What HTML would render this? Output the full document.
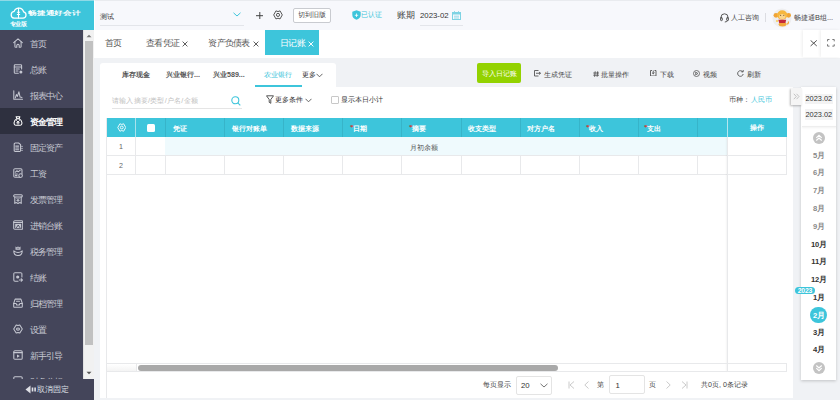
<!DOCTYPE html>
<html><head><meta charset="utf-8">
<style>
*{box-sizing:border-box;margin:0;padding:0}
html,body{width:840px;height:400px;overflow:hidden;background:#f0f2f5;font-family:"Liberation Sans",sans-serif;color:#333}
.a{position:absolute;white-space:nowrap}
#logo{left:0;top:0;width:94.5px;height:30px;background:#3dc5db;border-top:1px solid #8fd9e6}
#side{left:0;top:30px;width:83px;height:370px;background:#44455a;overflow:hidden}
#sbar{left:83px;top:30px;width:11px;height:349px;background:#f1f1f1;border-left:1px solid #e2e2e2}
#thumb{left:85px;top:41px;width:8px;height:304px;background:#c1c1c1}
#topbar{left:94px;top:0;width:746px;height:30px;background:#f7f8fc;border-top:1px solid #e9ebef;border-left:1px solid #fff}
#tabbar{left:94px;top:30px;width:746px;height:27.5px;background:#fff}
.mi{position:absolute;left:0;width:83px;height:26px;color:#c8cad3;font-size:8.2px;line-height:26px}
.mi span{position:absolute;left:29.5px;top:0.8px;letter-spacing:-0.75px;font-size:8.7px}
.mi svg{position:absolute;left:13px;top:7.6px;width:10px;height:10px}
.mi.act{background:#2e303f;color:#fff;font-weight:bold}
#card1{left:100px;top:63px;width:236px;height:30px;background:#fff;border-radius:3px 3px 0 0}
#card{left:100px;top:87px;width:693px;height:310.5px;background:#fff}
.th{top:118px;height:19px;background:#3dc5db}
.t85{font-size:9px;line-height:11px;letter-spacing:-0.7px}
.th7{font-size:7.1px;line-height:9px;color:#fff;font-weight:bold;margin-top:2px;font-family:"Liberation Serif",serif}
.dp{font-size:7.4px;line-height:10px;color:#333}
.mo{left:801.5px;width:35px;text-align:center;font-size:7.6px;line-height:10px;font-weight:bold;letter-spacing:-0.2px}
.tb{top:69.5px;font-size:7.4px;line-height:9px;color:#444}
.t7{font-size:7.1px;line-height:9px}
</style></head><body>
<!-- logo -->
<div class="a" id="logo">
  <svg class="a" style="left:9.5px;top:5.5px" width="17" height="12" viewBox="0 0 17 12" fill="none" stroke="#fff" stroke-width="1.25" stroke-linejoin="round">
    <path d="M4 11.2 H13 A3.2 3.2 0 0 0 13.6 4.9 A4.9 4.9 0 0 0 4.2 4.3 A3.5 3.5 0 0 0 4 11.2 Z"/>
    <path d="M8.5 0.8 V11.5 M6.9 5.2 H10.1 M6.9 7.4 H10.1" stroke-width="1.05"/>
  </svg>
  <div class="a" style="left:27.8px;top:6.8px;color:#fff;font-size:9px;line-height:11px;letter-spacing:-0.1px;font-weight:bold;transform:scaleY(0.7);transform-origin:0 50%">畅捷通好会计</div>
  <div class="a" style="left:9.5px;top:18.5px;color:#fff;font-size:5.6px;line-height:8px;font-weight:bold;letter-spacing:-0.1px">专业版</div>
</div>
<!-- sidebar -->
<div class="a" id="side">
  <div class="mi" style="top:0px"><svg viewBox="0 0 10 10" fill="none" stroke="#c5c7d1" stroke-width="1.05" stroke-linecap="round" stroke-linejoin="round"><path d="M0.7 4.7 L5 0.9 L9.3 4.7"/><path d="M1.9 3.7 V8.4 Q1.9 9.3 2.8 9.3 H3.8 V7 Q5 5.8 6.2 7 V9.3 H7.2 Q8.1 9.3 8.1 8.4 V3.7"/></svg><span>首页</span></div>
  <div class="mi" style="top:26px"><svg viewBox="0 0 10 10" fill="none" stroke="#c5c7d1" stroke-width="1.05" stroke-linecap="round" stroke-linejoin="round"><path d="M8.6 5 V1.6 Q8.6 0.7 7.7 0.7 H2.2 Q1.3 0.7 1.3 1.6 V8.4 Q1.3 9.3 2.2 9.3 H5.3"/><path d="M1.3 2.9 H8.6 M3 4.9 H6.3 M3 6.9 H5"/><circle cx="7.9" cy="7.9" r="1.5" fill="#c5c7d1" stroke="none"/></svg><span>总账</span></div>
  <div class="mi" style="top:52px"><svg viewBox="0 0 10 10" fill="none" stroke="#c5c7d1" stroke-width="1.05" stroke-linecap="round" stroke-linejoin="round"><path d="M0.8 0.8 V9.2 H9.5"/><path d="M2.3 7.9 L3.4 4.6 L4.4 6.4 L5.9 1.8 L7.1 7.1 L9 7.5"/></svg><span>报表中心</span></div>
  <div class="mi act" style="top:78px"><svg viewBox="0 0 10 10" fill="none" stroke="#fff" stroke-width="1.05" stroke-linecap="round" stroke-linejoin="round"><path d="M3.1 0.8 H6.9 L6 2.7 H4 Z"/><path d="M4 2.7 C0.4 4.2 0.2 9.3 3 9.3 H7 C9.8 9.3 9.6 4.2 6 2.7"/><path d="M3.6 4.6 L5 6 L6.4 4.6 M5 6 V8.2 M3.7 6.8 H6.3" stroke-width="0.9"/></svg><span>资金管理</span></div>
  <div class="mi" style="top:104px"><svg viewBox="0 0 10 10" fill="none" stroke="#c5c7d1" stroke-width="1.05" stroke-linecap="round" stroke-linejoin="round"><path d="M1.2 2 Q1.2 1 2.2 1 H5.6 L7.6 2.6 V8.6 Q7.6 9.4 6.8 9.4 H2.2 Q1.2 9.4 1.2 8.4 Z"/><path d="M2.7 4.1 H5.7 M2.7 5.9 H5.7 M2.7 7.7 H5.7"/><circle cx="9" cy="4.4" r="0.7" fill="#c5c7d1" stroke="none"/><circle cx="9" cy="6.4" r="0.7" fill="#c5c7d1" stroke="none"/><circle cx="9" cy="8.4" r="0.7" fill="#c5c7d1" stroke="none"/></svg><span>固定资产</span></div>
  <div class="mi" style="top:130px"><svg viewBox="0 0 10 10" fill="none" stroke="#c5c7d1" stroke-width="1.05" stroke-linecap="round" stroke-linejoin="round"><path d="M6.5 9.3 H2 Q0.8 9.3 0.8 8.1 V1.9 Q0.8 0.7 2 0.7 H7.8 Q9 0.7 9 1.9 V5.6"/><path d="M2.4 4.2 L3.8 2.8 L5.2 3.8 L7.3 2.2 M2.4 6 H4.4 M2.4 7.6 H4"/><circle cx="7.6" cy="7.6" r="1.8"/></svg><span>工资</span></div>
  <div class="mi" style="top:156px"><svg viewBox="0 0 10 10" fill="none" stroke="#c5c7d1" stroke-width="1.05" stroke-linecap="round" stroke-linejoin="round"><rect x="0.7" y="0.8" width="8.6" height="2.1" rx="1"/><path d="M1.8 2.9 V9.4 L3.2 8.6 L5 9.4 L6.8 8.6 L8.2 9.4 V2.9"/><path d="M3.7 4.2 L5 5.5 L6.3 4.2 M5 5.5 V7.8 M3.8 6.4 H6.2" stroke-width="0.9"/></svg><span>发票管理</span></div>
  <div class="mi" style="top:182px"><svg viewBox="0 0 10 10" fill="none" stroke="#c5c7d1" stroke-width="1.05" stroke-linecap="round" stroke-linejoin="round"><rect x="0.7" y="0.7" width="9" height="8.6" rx="1.1"/><path d="M0.7 2.5 H9.7"/><rect x="2.2" y="3.8" width="6" height="4.2" fill="#c5c7d1" stroke="none"/><path d="M3.5 7.6 L5.2 5 L6.9 7.6" stroke="#44455a" stroke-width="0.9"/></svg><span>进销台账</span></div>
  <div class="mi" style="top:208px"><svg viewBox="0 0 10 10" fill="none" stroke="#c5c7d1" stroke-width="1.05" stroke-linecap="round" stroke-linejoin="round"><path d="M2.5 0.6 L3.7 1.3 L5 0.6 L6.3 1.3 L7.5 0.6 V3.7 H2.5 Z" fill="#c5c7d1" stroke="none"/><path d="M4 2.2 H6" stroke="#44455a" stroke-width="0.6"/><path d="M0.8 4.9 Q0.8 9.5 5 9.5 Q9.2 9.5 9.2 4.9 M0.8 4.9 Q5 8.2 9.2 4.9"/></svg><span>税务管理</span></div>
  <div class="mi" style="top:234px"><svg viewBox="0 0 10 10" fill="none" stroke="#c5c7d1" stroke-width="1.05" stroke-linecap="round" stroke-linejoin="round"><path d="M8.9 5 V1.9 Q8.9 0.7 7.7 0.7 H2 Q0.8 0.7 0.8 1.9 V8.1 Q0.8 9.3 2 9.3 H5"/><circle cx="4.7" cy="5" r="1.6" fill="#c5c7d1" stroke="none"/><path d="M6.3 8 H9.5 M8.2 6.7 L9.5 8 L8.2 9.3"/></svg><span>结账</span></div>
  <div class="mi" style="top:260px"><svg viewBox="0 0 10 10" fill="none" stroke="#c5c7d1" stroke-width="1.05" stroke-linecap="round" stroke-linejoin="round"><path d="M2.1 1.1 H7.9 L9.3 5.4 V8.5 Q9.3 9.3 8.5 9.3 H1.5 Q0.7 9.3 0.7 8.5 V5.4 Z"/><path d="M0.7 5.4 H3.1 L3.7 7 H6.3 L6.9 5.4 H9.3 M3.5 3.3 H6.5"/></svg><span>归档管理</span></div>
  <div class="mi" style="top:286px"><svg viewBox="0 0 10 10" fill="none" stroke="#c5c7d1" stroke-width="1.05" stroke-linecap="round" stroke-linejoin="round"><path d="M3.2 1 L5 1.6 L6.8 1 L9.3 5 L6.8 9 L5 8.4 L3.2 9 L0.7 5 Z"/><ellipse cx="5" cy="5" rx="1.5" ry="1.1"/></svg><span>设置</span></div>
  <div class="mi" style="top:312px"><svg viewBox="0 0 10 10" fill="none" stroke="#c5c7d1" stroke-width="1.05" stroke-linecap="round" stroke-linejoin="round"><rect x="0.8" y="0.7" width="8.4" height="8.6" rx="1.1"/><path d="M0.8 2.6 H9.2"/><path d="M4 4.4 L6.9 6.1 L4 7.8 Z" fill="#c5c7d1" stroke="none"/></svg><span>新手引导</span></div>
  <div class="mi" style="top:338px"><svg viewBox="0 0 10 10" fill="none" stroke="#c5c7d1" stroke-width="1.05" stroke-linecap="round" stroke-linejoin="round"><rect x="0.8" y="0.7" width="8.4" height="8.6" rx="1.1"/></svg><span>财务分析</span></div>
</div>
<div class="a" style="left:0;top:378.5px;width:94px;height:21.5px;background:#44455a"></div>
<svg class="a" style="left:25px;top:385px" width="12" height="9" viewBox="0 0 12 9"><path d="M0.5 4.5 L5.5 0.5 V8.5 Z" fill="#dfe0e6"/><rect x="6.7" y="2.5" width="1.6" height="4" fill="#dfe0e6"/><rect x="9.3" y="2.5" width="1.6" height="4" fill="#dfe0e6"/></svg>
<div class="a" style="left:37px;top:384.5px;color:#dfe0e6;font-size:8px;line-height:10px">取消固定</div>
<div class="a" id="sbar"></div>
<div class="a" id="thumb"></div>
<svg class="a" style="left:85px;top:33px" width="8" height="6" viewBox="0 0 8 6"><path d="M1.5 4.3 L4 1.8 L6.5 4.3 Z" fill="#777"/></svg>
<svg class="a" style="left:85px;top:370px" width="8" height="6" viewBox="0 0 8 6"><path d="M1.5 1.7 L4 4.2 L6.5 1.7 Z" fill="#555"/></svg>

<!-- top bar -->
<div class="a" id="topbar"></div>
<div class="a" style="left:100px;top:10.5px;font-size:7.4px;line-height:11px;color:#333">测试</div>
<div class="a" style="left:100px;top:25px;width:144px;height:1px;background:#e3e5ea"></div>
<svg class="a" style="left:233px;top:12px" width="8" height="5" viewBox="0 0 8 5"><path d="M0.5 0.8 L4 4 L7.5 0.8" fill="none" stroke="#3dc5db" stroke-width="1"/></svg>
<svg class="a" style="left:255.7px;top:12px" width="7.6" height="7.4" viewBox="0 0 7.6 7.4"><path d="M3.8 0 V7.4 M0 3.7 H7.6" stroke="#3a3a3a" stroke-width="0.95"/></svg>
<svg class="a" style="left:273px;top:10.3px" width="10" height="9.8" viewBox="0 0 10 10" fill="none" stroke="#4a4a4a" stroke-width="0.95" stroke-linejoin="round"><path d="M2.9 0.9 L5 1.6 L7.1 0.9 L9.4 5 L7.1 9.1 L5 8.4 L2.9 9.1 L0.6 5 Z"/><circle cx="5" cy="5" r="1.6"/></svg>
<div class="a" style="left:293.3px;top:8.3px;width:37.7px;height:14.3px;border:1px solid #c9cbd0;border-radius:2px;background:#fff;font-size:7.3px;line-height:12px;text-align:center;color:#444">切到旧版</div>
<svg class="a" style="left:351.5px;top:10px" width="9" height="10" viewBox="0 0 9 10"><path d="M4.5 0.3 L8.7 1.8 V5 C8.7 7.5 6.8 9 4.5 9.8 C2.2 9 0.3 7.5 0.3 5 V1.8 Z" fill="#3dc5db"/><path d="M2.8 5.3 H6.2 M4.5 3.5 V7" stroke="#fff" stroke-width="0.8"/></svg>
<div class="a" style="left:361px;top:10px;font-size:7.4px;line-height:10px;color:#3dc5db">已认证</div>
<div class="a" style="left:397px;top:9.5px;font-size:8.6px;line-height:11px;color:#444">账期</div>
<div class="a" style="left:420px;top:9.5px;font-size:7.8px;line-height:11px;color:#333">2023-02</div>
<svg class="a" style="left:452px;top:10.5px" width="9" height="9" viewBox="0 0 9 9"><rect x="0.5" y="1.5" width="8" height="7" fill="none" stroke="#7fd3e3" stroke-width="1"/><rect x="0.5" y="1.5" width="8" height="2" fill="#7fd3e3"/><path d="M2.5 0 V2 M6.5 0 V2 M2 5.2 H7 M2 7 H7" stroke="#7fd3e3" stroke-width="0.8"/></svg>
<div class="a" style="left:420px;top:24.5px;width:43px;height:1px;background:#e3e5ea"></div>
<svg class="a" style="left:720px;top:13px" width="9" height="9.5" viewBox="0 0 9 9.5" fill="none" stroke="#505050" stroke-width="0.95" stroke-linecap="round"><path d="M1 5.5 V4.3 A3.5 3.5 0 0 1 8 4.3 V5.5"/><rect x="0.6" y="4.6" width="1.7" height="3" rx="0.6"/><rect x="6.7" y="4.6" width="1.7" height="3" rx="0.6"/><path d="M7.6 7.6 Q7.3 9 5.2 9"/></svg>
<div class="a" style="left:731px;top:12.5px;font-size:7.4px;line-height:10px;color:#444">人工咨询</div>
<div class="a" style="left:765px;top:13px;width:1px;height:9px;background:#dcdde2"></div>
<svg class="a" style="left:771.5px;top:7.5px" width="20" height="20" viewBox="0 0 20 20">
  <circle cx="10" cy="10" r="9.6" fill="#eeeef0"/>
  <circle cx="4" cy="7.3" r="2.4" fill="#f0a436"/><circle cx="16.6" cy="7.3" r="2.4" fill="#f0a436"/>
  <ellipse cx="10.2" cy="7" rx="5.2" ry="4.7" fill="#f6b73e"/>
  <ellipse cx="10.2" cy="8.6" rx="3.2" ry="2.7" fill="#fbd48a"/>
  <circle cx="8.6" cy="7.4" r="0.6" fill="#8a6a40"/><circle cx="11.8" cy="7.4" r="0.6" fill="#8a6a40"/>
  <ellipse cx="10.5" cy="16.2" rx="3.8" ry="2.2" fill="#f2a83c"/>
  <path d="M6.3 11.7 H14.2 L13.4 14.9 H7.2 Z" fill="#c42a3c"/>
  <circle cx="5" cy="13" r="1.1" fill="#f8cf5a"/>
  <path d="M14.5 16 Q17 16 16.3 13.5" stroke="#f2a83c" stroke-width="1.2" fill="none"/>
</svg>
<div class="a" style="left:794px;top:12.5px;font-size:7.4px;line-height:10px;color:#444">畅捷通B组...</div>

<!-- tab bar -->
<div class="a" id="tabbar"></div>
<div class="a t85" style="left:104.6px;top:37.5px;color:#555">首页</div>
<div class="a t85" style="left:146px;top:37.5px;color:#555">查看凭证</div>
<svg class="a" style="left:181.5px;top:40.5px" width="6" height="6" viewBox="0 0 6 6"><path d="M0.6 0.6 L5.4 5.4 M5.4 0.6 L0.6 5.4" stroke="#555" stroke-width="0.95"/></svg>
<div class="a t85" style="left:208.3px;top:37.5px;color:#555">资产负债表</div>
<svg class="a" style="left:252.5px;top:40.5px" width="6" height="6" viewBox="0 0 6 6"><path d="M0.6 0.6 L5.4 5.4 M5.4 0.6 L0.6 5.4" stroke="#555" stroke-width="0.95"/></svg>
<div class="a" style="left:264.7px;top:29.7px;width:54px;height:25.8px;background:#3dc5db"></div>
<div class="a t85" style="left:280px;top:37.5px;color:#fff">日记账</div>
<svg class="a" style="left:307.5px;top:40.5px" width="6" height="6" viewBox="0 0 6 6"><path d="M0.6 0.6 L5.4 5.4 M5.4 0.6 L0.6 5.4" stroke="#fff" stroke-width="0.95"/></svg>
<div class="a" style="left:803px;top:30px;width:18px;height:27px;background:#fff;box-shadow:-1px 0 3px rgba(0,0,0,0.07)"></div>
<div class="a" style="left:821px;top:30px;width:19px;height:27px;background:#fff;box-shadow:-1px 0 3px rgba(0,0,0,0.07)"></div>
<svg class="a" style="left:809.6px;top:40.2px" width="7.4" height="6.4" viewBox="0 0 7.4 6.4"><path d="M0.6 0.4 L6.8 6 M6.8 0.4 L0.6 6" stroke="#4a4a4a" stroke-width="0.95"/></svg>
<svg class="a" style="left:827px;top:39.2px" width="7.8" height="7.6" viewBox="0 0 8 8" fill="none" stroke="#666" stroke-width="0.95"><path d="M0.5 2.5 V0.5 H2.5 M5.5 0.5 H7.5 V2.5 M7.5 5.5 V7.5 H5.5 M2.5 7.5 H0.5 V5.5"/></svg>

<!-- card -->
<div class="a" id="card1"></div>
<div class="a" id="card"></div>
<div class="a t7" style="left:122px;top:71px;color:#555;font-weight:bold">库存现金</div>
<div class="a t7" style="left:166px;top:71px;color:#555;font-weight:bold">兴业银行...</div>
<div class="a t7" style="left:213px;top:71px;color:#555;font-weight:bold">兴业589...</div>
<div class="a t7" style="left:264px;top:71px;color:#3dc5db">农业银行</div>
<div class="a t7" style="left:302px;top:71px;color:#333">更多</div>
<svg class="a" style="left:316px;top:73px" width="7" height="5" viewBox="0 0 7 5"><path d="M0.5 0.8 L3.5 3.8 L6.5 0.8" fill="none" stroke="#555" stroke-width="0.9"/></svg>
<div class="a" style="left:255px;top:84.5px;width:47px;height:2px;background:#3dc5db"></div>

<!-- toolbar -->
<div class="a" style="left:477px;top:63px;width:44px;height:19.5px;background:#93d200;border-radius:2px"></div>
<div class="a tb" style="left:481.5px;top:68.5px;color:#fff;font-size:7.2px;letter-spacing:0.2px">导入日记账</div>
<svg class="a" style="left:534px;top:70.3px" width="7" height="6.5" viewBox="0 0 7 6.5" fill="none" stroke="#555" stroke-width="0.9"><path d="M4.5 0.5 H0.5 V6 H4.5 M2 3.25 H6.5 M5 2 L6.5 3.25 L5 4.5"/></svg>
<div class="a tb" style="left:543.5px">生成凭证</div>
<svg class="a" style="left:592.5px;top:71px" width="6.5" height="6" viewBox="0 0 6.5 6" fill="none" stroke="#555" stroke-width="0.9"><path d="M0.3 2 H6.2 M0.3 4.2 H6.2 M2.2 0.3 L1.6 5.8 M4.7 0.3 L4.1 5.8"/></svg>
<div class="a tb" style="left:601.3px">批量操作</div>
<svg class="a" style="left:650px;top:69.7px" width="6.5" height="6.5" viewBox="0 0 6.5 6.5" fill="none" stroke="#555" stroke-width="0.9"><path d="M2 0.5 H0.5 V6 H6 V0.5 H4.5 M3.25 0.5 V3.8 M2 2.6 L3.25 3.8 L4.5 2.6"/></svg>
<div class="a tb" style="left:659.7px">下载</div>
<svg class="a" style="left:693.2px;top:69.8px" width="7" height="7" viewBox="0 0 7 7" fill="none" stroke="#555" stroke-width="0.8"><circle cx="3.5" cy="3.5" r="3"/><path d="M2.7 2.1 L4.9 3.5 L2.7 4.9 Z"/></svg>
<div class="a tb" style="left:703px">视频</div>
<svg class="a" style="left:737px;top:69.8px" width="7" height="7" viewBox="0 0 7 7" fill="none" stroke="#555" stroke-width="0.9"><path d="M5.8 2 A2.8 2.8 0 1 0 6.2 4"/><path d="M4.3 1.8 H6.2 V0" /></svg>
<div class="a tb" style="left:746.7px">刷新</div>
<!-- search row -->
<div class="a t7" style="left:112px;top:95.5px;color:#c0c0c0;font-size:7.4px;letter-spacing:0.2px">请输入摘要/类型/户名/金额</div>
<svg class="a" style="left:231px;top:95.5px" width="10" height="10" viewBox="0 0 10 10" fill="none" stroke="#3dc5db" stroke-width="1.1"><circle cx="4.3" cy="4.3" r="3.5"/><path d="M6.8 6.8 L9.3 9.3"/></svg>
<div class="a" style="left:112px;top:108px;width:130px;height:1px;background:#e5e5e5"></div>
<svg class="a" style="left:266px;top:95px" width="8" height="9" viewBox="0 0 8 9" fill="none" stroke="#444" stroke-width="0.9"><path d="M0.5 0.8 H7.5 L4.8 4.5 V8.3 L3.2 7.3 V4.5 Z"/></svg>
<div class="a t7" style="left:275px;top:95.5px;color:#333">更多条件</div>
<svg class="a" style="left:305px;top:98px" width="7" height="5" viewBox="0 0 7 5"><path d="M0.5 0.8 L3.5 3.8 L6.5 0.8" fill="none" stroke="#555" stroke-width="0.9"/></svg>
<div class="a" style="left:331px;top:95.5px;width:8px;height:8px;border:1px solid #c8c8c8;border-radius:1px;background:#fff"></div>
<div class="a t7" style="left:341px;top:95.5px;color:#333">显示本日小计</div>
<div class="a t7" style="left:729px;top:95.5px;color:#444">币种：</div><div class="a t7" style="left:751px;top:95.5px;color:#3dc5db;letter-spacing:0.1px">人民币</div>

<!-- table -->
<div class="a" style="left:106.5px;top:118px;width:680.5px;height:19px;background:#3dc5db"></div>
<div class="a" style="left:165px;top:137px;width:562px;height:18px;background:#effafd"></div>
<div class="a" style="left:106.5px;top:155px;width:680.5px;height:1px;background:#e8e9eb"></div>
<div class="a" style="left:106.5px;top:174px;width:680.5px;height:1px;background:#e8e9eb"></div>
<div class="a" style="left:106px;top:118px;width:1px;height:279.5px;background:#e8e9eb"></div>
<div class="a" style="left:135px;top:137px;width:1px;height:37px;background:#e8e9eb"></div>
<div class="a" style="left:165px;top:155px;width:1px;height:19px;background:#e8e9eb"></div>
<div class="a" style="left:224px;top:155px;width:1px;height:19px;background:#e8e9eb"></div>
<div class="a" style="left:283px;top:155px;width:1px;height:19px;background:#e8e9eb"></div>
<div class="a" style="left:342px;top:155px;width:1px;height:19px;background:#e8e9eb"></div>
<div class="a" style="left:401px;top:155px;width:1px;height:19px;background:#e8e9eb"></div>
<div class="a" style="left:461px;top:155px;width:1px;height:19px;background:#e8e9eb"></div>
<div class="a" style="left:520px;top:155px;width:1px;height:19px;background:#e8e9eb"></div>
<div class="a" style="left:579px;top:155px;width:1px;height:19px;background:#e8e9eb"></div>
<div class="a" style="left:638px;top:155px;width:1px;height:19px;background:#e8e9eb"></div>
<div class="a" style="left:697px;top:155px;width:1px;height:19px;background:#e8e9eb"></div>
<div class="a" style="left:135px;top:118px;width:1px;height:19px;background:#a9e2ec"></div>
<div class="a" style="left:165px;top:118px;width:1px;height:19px;background:#37b4c9"></div>
<div class="a" style="left:224px;top:118px;width:1px;height:19px;background:#37b4c9"></div>
<div class="a" style="left:283px;top:118px;width:1px;height:19px;background:#37b4c9"></div>
<div class="a" style="left:342px;top:118px;width:1px;height:19px;background:#37b4c9"></div>
<div class="a" style="left:401px;top:118px;width:1px;height:19px;background:#37b4c9"></div>
<div class="a" style="left:461px;top:118px;width:1px;height:19px;background:#37b4c9"></div>
<div class="a" style="left:520px;top:118px;width:1px;height:19px;background:#37b4c9"></div>
<div class="a" style="left:579px;top:118px;width:1px;height:19px;background:#37b4c9"></div>
<div class="a" style="left:638px;top:118px;width:1px;height:19px;background:#37b4c9"></div>
<div class="a" style="left:697px;top:118px;width:1px;height:19px;background:#37b4c9"></div>
<div class="a th7" style="left:173px;top:122.5px">凭证</div>
<div class="a th7" style="left:232px;top:122.5px">银行对账单</div>
<div class="a th7" style="left:291px;top:122.5px">数据来源</div>
<div class="a th7" style="left:350px;top:122.5px"><span style="color:#e0322c;position:relative;top:-1.2px;margin-right:-0.6px">*</span>日期</div>
<div class="a th7" style="left:409px;top:122.5px"><span style="color:#e0322c;position:relative;top:-1.2px;margin-right:-0.6px">*</span>摘要</div>
<div class="a th7" style="left:468px;top:122.5px">收支类型</div>
<div class="a th7" style="left:527px;top:122.5px">对方户名</div>
<div class="a th7" style="left:586px;top:122.5px"><span style="color:#e0322c;position:relative;top:-1.2px;margin-right:-0.6px">*</span>收入</div>
<div class="a th7" style="left:644px;top:122.5px"><span style="color:#e0322c;position:relative;top:-1.2px;margin-right:-0.6px">*</span>支出</div>
<svg class="a" style="left:116.8px;top:122.8px" width="9.5" height="9" viewBox="0 0 10 10" fill="none" stroke="#fff" stroke-width="1" stroke-linejoin="round"><path d="M2.9 0.9 L5 1.6 L7.1 0.9 L9.4 5 L7.1 9.1 L5 8.4 L2.9 9.1 L0.6 5 Z"/><circle cx="5" cy="5" r="1.6"/></svg>
<div class="a" style="left:147px;top:124px;width:7.5px;height:7.5px;background:#fff;border-radius:1.5px"></div>
<div class="a t7" style="left:119px;top:143.3px;color:#666">1</div>
<div class="a t7" style="left:119px;top:161.5px;color:#666">2</div>
<div class="a t7" style="left:410px;top:143.6px;color:#555">月初余额</div>
<div class="a" style="left:727px;top:118px;width:60px;height:56px;border-left:1px solid #e3e5e8"></div>
<div class="a" style="left:727px;top:118px;width:60px;height:19px;background:#3dc5db"></div>
<div class="a th7" style="left:750px;top:122px">操作</div>
<div class="a" style="left:727px;top:137px;width:60px;height:37px;background:#fff;border-right:1px solid #e8e9eb"></div>
<div class="a" style="left:727px;top:155px;width:60px;height:1px;background:#e8e9eb"></div>
<div class="a" style="left:727px;top:174px;width:60px;height:1px;background:#e8e9eb"></div>
<div class="a" style="left:727px;top:137px;width:1px;height:234.5px;background:#e8e9eb;box-shadow:-1px 0 1.5px rgba(0,0,0,0.05)"></div>
<div class="a" style="left:727px;top:118px;width:1px;height:19px;background:#b5e6ef"></div>
<div class="a" style="left:106.5px;top:363px;width:680.5px;height:1px;background:#e8e9eb"></div>
<div class="a" style="left:107px;top:364px;width:29px;height:7px;background:linear-gradient(#fff,#f4f4f4)"></div>
<div class="a" style="left:106.5px;top:371px;width:680.5px;height:1px;background:#e8e9eb"></div>
<div class="a" style="left:136px;top:363px;width:1px;height:9px;background:#e8e9eb"></div>
<div class="a" style="left:786px;top:363px;width:1px;height:9px;background:#e8e9eb"></div>
<div class="a" style="left:137.5px;top:365px;width:420px;height:5.5px;background:#a9a9a9;border-radius:3px"></div>
<div class="a t7" style="left:483px;top:380.5px;color:#444">每页显示</div>
<div class="a" style="left:516px;top:375.5px;width:35.5px;height:19px;border:1px solid #e4e4e4;border-radius:2px"></div>
<div class="a t7" style="left:521px;top:380.5px;color:#333;font-size:7.8px">20</div>
<svg class="a" style="left:540px;top:382.5px" width="8" height="5" viewBox="0 0 8 5"><path d="M0.5 0.8 L4 4 L7.5 0.8" fill="none" stroke="#666" stroke-width="0.9"/></svg>
<svg class="a" style="left:567.5px;top:380.5px" width="7" height="8" viewBox="0 0 7 8" fill="none" stroke="#c4c4c4" stroke-width="0.9"><path d="M1 0.5 V7.5 M6 0.5 L2 4 L6 7.5"/></svg>
<svg class="a" style="left:583.5px;top:380.5px" width="5" height="8" viewBox="0 0 5 8" fill="none" stroke="#c4c4c4" stroke-width="0.9"><path d="M4.5 0.5 L0.8 4 L4.5 7.5"/></svg>
<div class="a t7" style="left:597px;top:380.5px;color:#444">第</div>
<div class="a" style="left:609px;top:375px;width:35.5px;height:19px;border:1px solid #e4e4e4;border-radius:2px"></div>
<div class="a t7" style="left:615.5px;top:380.5px;color:#333;font-size:7.8px">1</div>
<div class="a t7" style="left:649px;top:380.5px;color:#444">页</div>
<svg class="a" style="left:665.5px;top:380.5px" width="5" height="8" viewBox="0 0 5 8" fill="none" stroke="#c4c4c4" stroke-width="0.9"><path d="M0.5 0.5 L4.2 4 L0.5 7.5"/></svg>
<svg class="a" style="left:680.5px;top:380.5px" width="7" height="8" viewBox="0 0 7 8" fill="none" stroke="#c4c4c4" stroke-width="0.9"><path d="M6 0.5 V7.5 M1 0.5 L5 4 L1 7.5"/></svg>
<div class="a t7" style="left:701px;top:380.5px;color:#444">共0页, 0条记录</div>
<!-- date panel -->
<div class="a" style="left:801px;top:87px;width:35px;height:293px;background:#fff;box-shadow:0 1px 3px rgba(0,0,0,0.2)"></div>
<div class="a" style="left:790.8px;top:87.8px;width:11px;height:17px;background:#f5f5f5;box-shadow:-1px 1px 2px rgba(0,0,0,0.28)"></div>
<svg class="a" style="left:792.5px;top:92.5px" width="7" height="7" viewBox="0 0 7 7" fill="none" stroke="#b5b5b5" stroke-width="0.8"><path d="M0.8 0.8 L3.3 3.5 L0.8 6.2 M3.5 0.8 L6 3.5 L3.5 6.2"/></svg>
<div class="a" style="left:805px;top:93.5px;width:28px;height:10.5px;background:#f3f3f3"></div>
<div class="a" style="left:805px;top:109px;width:28px;height:10.5px;background:#f3f3f3"></div>
<div class="a dp" style="left:805.5px;top:94px">2023.02</div>
<div class="a dp" style="left:805.5px;top:109.5px">2023.02</div>
<div class="a" style="left:801.5px;top:125.5px;width:34.5px;height:1px;background:#eee;box-shadow:0 1px 2px rgba(0,0,0,0.08)"></div>
<svg class="a" style="left:812.8px;top:132.3px" width="12" height="12" viewBox="0 0 12 12"><circle cx="6" cy="6" r="6" fill="#c3c3c3"/><path d="M3.3 5.9 L6 3.4 L8.7 5.9 M3.3 8.5 L6 6 L8.7 8.5" fill="none" stroke="#fff" stroke-width="1.15"/></svg>
<div class="a mo" style="top:150.75px;color:#8a8a8a">5月</div>
<div class="a mo" style="top:168.3px;color:#8a8a8a">6月</div>
<div class="a mo" style="top:186px;color:#8a8a8a">7月</div>
<div class="a mo" style="top:203.5px;color:#8a8a8a">8月</div>
<div class="a mo" style="top:221.8px;color:#8a8a8a">9月</div>
<div class="a mo" style="top:239.5px;color:#333">10月</div>
<div class="a mo" style="top:257px;color:#333">11月</div>
<div class="a mo" style="top:274.5px;color:#333">12月</div>
<div class="a mo" style="top:293.3px;color:#333">1月</div>
<div class="a mo" style="top:327.8px;color:#333">3月</div>
<div class="a mo" style="top:345px;color:#333">4月</div>
<div class="a" style="left:810.3px;top:306.8px;width:16.6px;height:16.6px;border-radius:50%;background:#3dc5db"></div>
<div class="a mo" style="top:310.5px;color:#fff">2月</div>
<div class="a" style="left:795px;top:286.7px;width:20px;height:7px;border-radius:3.5px;background:#3dc5db;color:#fff;font-size:6.8px;line-height:7.2px;text-align:center;font-weight:bold;letter-spacing:-0.15px">2023</div>
<svg class="a" style="left:812.8px;top:361.8px" width="12" height="12" viewBox="0 0 12 12"><circle cx="6" cy="6" r="6" fill="#c3c3c3"/><path d="M3.3 3.5 L6 6 L8.7 3.5 M3.3 6.1 L6 8.6 L8.7 6.1" fill="none" stroke="#fff" stroke-width="1.15"/></svg>
</body></html>
